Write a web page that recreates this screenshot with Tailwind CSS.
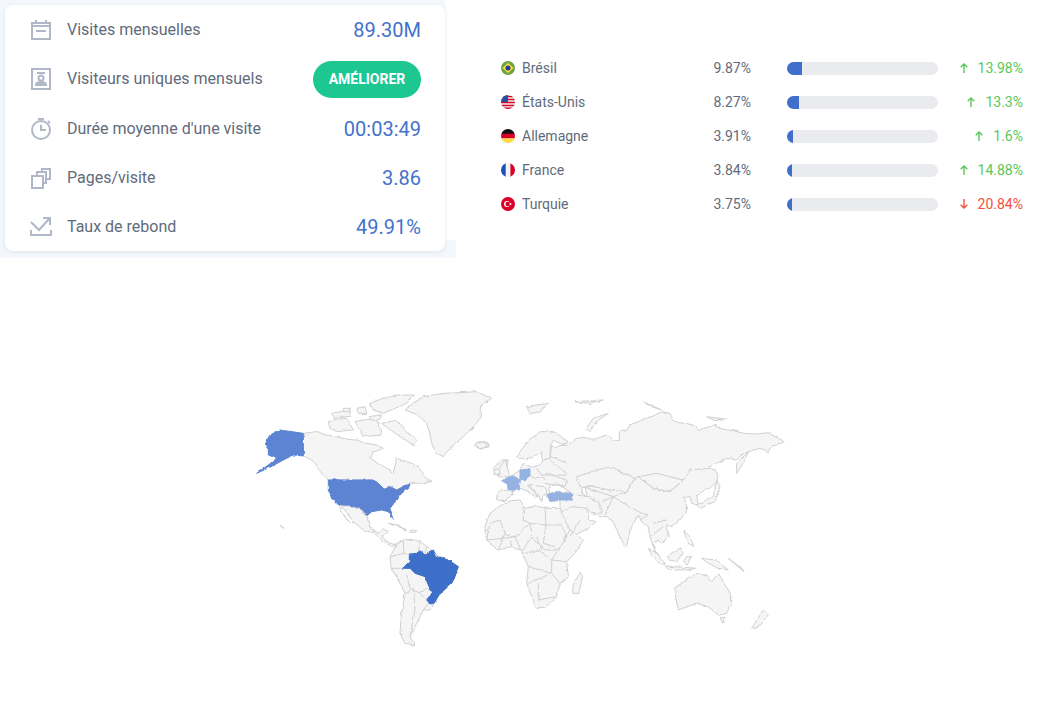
<!DOCTYPE html>
<html lang="fr">

<head>
    <meta charset="UTF-8">
    <title>Trafic</title>
    <script src="https://cdn.jsdelivr.net/npm/@tailwindcss/browser@4"></script>
</head>

<body class="bg-white font-['Roboto',sans-serif] w-[1046px] h-[724px] overflow-hidden">

    <div class="flex h-[258px]">
        <!-- Stats card -->
        <div class="relative w-[456px] h-[258px] pl-[5px] pt-[5px]">
            <div class="absolute left-0 top-0 w-[445px] h-[258px] bg-[#f4f8fc]"></div>
            <div class="absolute left-0 bottom-0 w-[456px] h-[18px] bg-[#f4f8fc]"></div>
            <div class="relative w-[440px] h-[246px] bg-white rounded-lg shadow-[0_1px_4px_rgba(120,140,170,0.18)] pl-[25px] pr-[24px] pt-[0.5px] text-[#5f6b7c]">
                <div class="flex items-center h-[49.25px]">
                    <svg class="w-[22px] h-[22px] mr-[15px]" viewBox="0 0 22 22" fill="none" stroke="#b0b8c8" stroke-width="2"><path d="M2 4h18v16H2zM6 1v4M16 1v4M2 7h18M6 12h10"/></svg>
                    <span class="flex-1 text-base">Visites mensuelles</span>
                    <span class="text-xl text-[#4472ca]">89.30M</span>
                </div>
                <div class="flex items-center h-[49.25px]">
                    <svg class="w-[22px] h-[22px] mr-[15px]" viewBox="0 0 22 22" fill="none" stroke="#b0b8c8" stroke-width="2"><path d="M2 1h18v20H2zM7 5h8"/><circle cx="11" cy="10" r="2.5"/><path d="M6 17c0-4 10-4 10 0z" fill="#b0b8c8"/></svg>
                    <span class="flex-1 text-base">Visiteurs uniques mensuels</span>
                    <button class="w-[108px] h-[37px] rounded-full bg-[#1cc88f] text-white text-sm font-bold">AMÉLIORER</button>
                </div>
                <div class="flex items-center h-[49.25px]">
                    <svg class="w-[22px] h-[22px] mr-[15px]" viewBox="0 0 22 22" fill="none" stroke="#b0b8c8" stroke-width="2"><circle cx="11" cy="12" r="9"/><path d="M11 7v5h5M8 1h6M18 3l2 2"/></svg>
                    <span class="flex-1 text-base">Durée moyenne d'une visite</span>
                    <span class="text-xl text-[#4472ca]">00:03:49</span>
                </div>
                <div class="flex items-center h-[49.25px]">
                    <svg class="w-[22px] h-[22px] mr-[15px]" viewBox="0 0 22 22" fill="none" stroke="#b0b8c8" stroke-width="2"><path d="M2 9h11v12H2zM7 9V5h9v11h-3M12 5V2h8v10h-4"/></svg>
                    <span class="flex-1 text-base">Pages/visite</span>
                    <span class="text-xl text-[#4472ca]">3.86</span>
                </div>
                <div class="flex items-center h-[49.25px]">
                    <svg class="w-[22px] h-[22px] mr-[15px]" viewBox="0 0 22 22" fill="none" stroke="#b0b8c8" stroke-width="2"><path d="M1 14v5h20v-5M1 6l8 8L19 3M13 2h7v7"/></svg>
                    <span class="flex-1 text-base">Taux de rebond</span>
                    <span class="text-xl text-[#4472ca]">49.91%</span>
                </div>
            </div>
        </div>

        <!-- Countries -->
        <div class="ml-[45px] pt-[51px] w-[522px] text-sm text-[#5f6b7c]">
            <div class="flex items-center h-[34px]">
                <svg class="w-[14px] h-[14px] mr-[7px]" viewBox="0 0 14 14"><circle cx="7" cy="7" r="7" fill="#6da544"/><path d="M7 2L12.500 7 7 12 1.500 7z" fill="#ffda44"/><circle cx="7" cy="7" r="2.500" fill="#1c3f94"/></svg>
                <span class="flex-1">Brésil</span>
                <span>9.87%</span>
                <div class="ml-[36px] w-[151px] h-[13px] rounded-full bg-[#e9ebee] overflow-hidden"><div class="h-full w-[15px] bg-[#3f6fcb]"></div></div>
                <span class="w-[85px] flex items-center justify-end text-[#5ac85a]"><svg class="w-[8px] h-[10px] mr-[10px]" viewBox="0 0 8 10" fill="none" stroke="currentColor" stroke-width="1.400"><path d="M4 10V1M.7 4.300L4 1l3.300 3.300"/></svg>13.98%</span>
            </div>
            <div class="flex items-center h-[34px]">
                <svg class="w-[14px] h-[14px] mr-[7px]" viewBox="0 0 14 14"><defs><clipPath id="us"><circle cx="7" cy="7" r="7"/></clipPath></defs><g clip-path="url(#us)"><rect width="14" height="14" fill="#f0f0f0"/><path d="M0 1.500h14M0 4.500h14M0 7.500h14M0 10.500h14M0 13.300h14" stroke="#d80027" stroke-width="1.500"/><rect width="7" height="7" fill="#2a4f9e"/></g></svg>
                <span class="flex-1">États-Unis</span>
                <span>8.27%</span>
                <div class="ml-[36px] w-[151px] h-[13px] rounded-full bg-[#e9ebee] overflow-hidden"><div class="h-full w-[12px] bg-[#3f6fcb]"></div></div>
                <span class="w-[85px] flex items-center justify-end text-[#5ac85a]"><svg class="w-[8px] h-[10px] mr-[10px]" viewBox="0 0 8 10" fill="none" stroke="currentColor" stroke-width="1.400"><path d="M4 10V1M.7 4.300L4 1l3.300 3.300"/></svg>13.3%</span>
            </div>
            <div class="flex items-center h-[34px]">
                <svg class="w-[14px] h-[14px] mr-[7px]" viewBox="0 0 14 14"><defs><clipPath id="de"><circle cx="7" cy="7" r="7"/></clipPath></defs><g clip-path="url(#de)"><rect width="14" height="5" fill="#111"/><rect y="4.700" width="14" height="4.700" fill="#d80027"/><rect y="9.400" width="14" height="4.600" fill="#ffda44"/></g></svg>
                <span class="flex-1">Allemagne</span>
                <span>3.91%</span>
                <div class="ml-[36px] w-[151px] h-[13px] rounded-full bg-[#e9ebee] overflow-hidden"><div class="h-full w-[6px] bg-[#3f6fcb]"></div></div>
                <span class="w-[85px] flex items-center justify-end text-[#5ac85a]"><svg class="w-[8px] h-[10px] mr-[10px]" viewBox="0 0 8 10" fill="none" stroke="currentColor" stroke-width="1.400"><path d="M4 10V1M.7 4.300L4 1l3.300 3.300"/></svg>1.6%</span>
            </div>
            <div class="flex items-center h-[34px]">
                <svg class="w-[14px] h-[14px] mr-[7px]" viewBox="0 0 14 14"><defs><clipPath id="fr"><circle cx="7" cy="7" r="7"/></clipPath></defs><g clip-path="url(#fr)"><rect width="5" height="14" fill="#1c50b8"/><rect x="4.700" width="4.700" height="14" fill="#f4f4f4"/><rect x="9.400" width="4.600" height="14" fill="#d80027"/></g></svg>
                <span class="flex-1">France</span>
                <span>3.84%</span>
                <div class="ml-[36px] w-[151px] h-[13px] rounded-full bg-[#e9ebee] overflow-hidden"><div class="h-full w-[5px] bg-[#3f6fcb]"></div></div>
                <span class="w-[85px] flex items-center justify-end text-[#5ac85a]"><svg class="w-[8px] h-[10px] mr-[10px]" viewBox="0 0 8 10" fill="none" stroke="currentColor" stroke-width="1.400"><path d="M4 10V1M.7 4.300L4 1l3.300 3.300"/></svg>14.88%</span>
            </div>
            <div class="flex items-center h-[34px]">
                <svg class="w-[14px] h-[14px] mr-[7px]" viewBox="0 0 14 14"><circle cx="7" cy="7" r="7" fill="#d80027"/><circle cx="6" cy="7" r="3" fill="#f6f6f6"/><circle cx="6.800" cy="7" r="2.300" fill="#d80027"/><circle cx="9.500" cy="7" r="1" fill="#f6f6f6"/></svg>
                <span class="flex-1">Turquie</span>
                <span>3.75%</span>
                <div class="ml-[36px] w-[151px] h-[13px] rounded-full bg-[#e9ebee] overflow-hidden"><div class="h-full w-[5px] bg-[#3f6fcb]"></div></div>
                <span class="w-[85px] flex items-center justify-end text-[#f4503c]"><svg class="w-[8px] h-[10px] mr-[10px]" viewBox="0 0 8 10" fill="none" stroke="currentColor" stroke-width="1.400"><path d="M4 0V9M.7 5.700L4 9l3.300-3.300"/></svg>20.84%</span>
            </div>
        </div>
    </div>

    <!-- World map -->
    <svg class="block ml-[250px] mt-[122px] w-[550px] h-[280px]" viewBox="250 380 550 280" fill="#f5f5f5" stroke="#cfcfcf" stroke-width="3" stroke-linejoin="round">
        <defs>
            <filter id="rough" x="-5%" y="-5%" width="110%" height="110%" color-interpolation-filters="sRGB">
                <feTurbulence type="fractalNoise" baseFrequency="0.18" numOctaves="2" seed="4"/>
                <feDisplacementMap in="SourceGraphic" scale="3" xChannelSelector="R" yChannelSelector="G"/>
            </filter>
        </defs>
        <g filter="url(#rough)">
        <!-- Americas -->
        <g transform="translate(250 380) scale(0.3333)">
            <path d="M465 90L490 70 520 50 550 45 580 40 630 38 680 35 725 55 700 70 690 85 695 105 680 130 660 150 640 170 610 195 600 205 580 230 560 220 545 190 540 160 530 130 505 105z"/>
            <path d="M672 195L690 185 715 188 718 200 690 208z"/>
            <path d="M395 130L420 125 440 120 465 150 500 180 490 195 460 175 420 150z"/>
            <path d="M360 70L400 55 440 45 490 45 470 70 435 85 400 100 370 90z"/>
            <path d="M235 125L265 118 290 115 310 150 260 155 240 145z"/>
            <path d="M245 100L300 90 305 108 255 115z"/>
            <path d="M320 85L345 80 350 100 325 100z"/>
            <path d="M280 85L300 85 298 95 282 95z"/>
            <path d="M315 125L350 118 380 120 395 165 340 170z"/>
            <path d="M355 110L395 105 390 118 360 120z"/>
            <path d="M730 265L755 240 775 240 765 285 740 285z"/>
            <path d="M160 160L200 155 230 165 260 170 290 178 320 180 350 190 380 195 400 205 385 212 370 215 362 235 385 250 420 270 430 280 440 235 470 245 500 255 515 275 530 295 545 305 510 310 480 310 440 330 420 320 400 325 385 310 370 300 235 300 215 280 185 240 160 228z"/>
            <path d="M45 190L60 165 90 150 160 160 160 228 130 225 100 240 60 262 20 280 55 255 80 235 55 225 55 205z" fill="#5c84d3" stroke="#5c84d3"/>
            <path d="M235 300L370 300 385 310 400 325 420 320 440 330 480 310 478 320 450 345 440 360 420 385 428 415 415 395 395 390 365 395 350 408 335 390 300 378 270 378 245 355 235 330z" fill="#5c84d3" stroke="#5c84d3"/>
            <path d="M270 378L300 378 335 390 350 408 360 440 385 460 400 445 415 455 395 470 420 490 440 495 425 500 395 480 375 460 340 450 310 425 290 395z"/>
            <path d="M270 385L285 410 300 428 285 412z"/>
            <path d="M415 430L445 435 470 450 445 440z"/>
            <path d="M480 450L500 452 495 458 480 456z"/>
            <path d="M90 435L102 445 95 442z"/>
            <path d="M440 495L460 480 485 478 510 485 545 510 560 525 595 540 625 560 615 590 605 610 585 630 565 650 540 690 520 690 495 740 480 770 495 795 465 790 450 760 452 730 455 700 465 640 445 600 425 565 420 530z"/>
            <path d="M458 565L478 545 478 522 500 520 510 512 525 525 550 510 560 530 595 540 625 560 615 590 605 610 570 640 552 670 540 672 530 660 545 640 525 590 495 580 480 565z" fill="#3d6fc9" stroke="#3d6fc9"/>
            <path d="M460 482L462 520 478 525M422 530L462 520M425 565L458 565M510 487L505 512M530 500L525 522M470 585L480 625 510 640 530 625M465 640L490 625 495 690 480 770M510 640L530 660M520 690L535 670" fill="none"/>
        </g>
        <!-- Europe, Africa, Asia, Oceania -->
        <g transform="translate(470 380) scale(0.3333)">
            <path d="M140 235L150 215 165 195 185 175 210 155 250 155 275 170 295 185 280 195 250 180 240 205 240 235 215 240 215 215 190 230 170 240 160 235z"/>
            <path d="M97 303L125 288 150 270 160 250 185 262 210 255 220 240 240 235 245 200 295 195 305 185 320 175 345 172 370 178 410 165 425 175 432 185 445 180 450 152 470 150 480 135 505 125 530 115 555 105 575 95 600 100 610 120 625 128 645 130 670 135 685 150 705 145 730 135 760 148 790 152 820 160 860 162 895 158 925 175 945 185 920 195 905 198 895 215 870 205 845 212 825 218 810 230 800 240 770 235 740 250 715 262 735 270 745 285 740 305 725 320 705 328 695 340 680 345 685 375 665 370 660 350 640 350 650 372 648 400 630 420 605 440 590 435 590 450 595 470 575 490 565 480 550 490 555 510 570 530 555 515 540 470 535 440 515 425 505 405 480 450 470 500 460 490 440 450 430 425 410 410 385 410 365 400 350 385 360 420 378 425 355 445 305 470 295 455 280 415 270 385 270 362 240 364 232 345 222 345 215 365 205 345 185 325 172 316 178 320 205 350 195 350 165 330 150 325 130 330 125 345 105 362 80 360 82 335 115 330 112 312z"/>
            <path d="M235 325L260 310 300 335 265 335 240 340z" fill="#fff"/>
            <path d="M335 325L345 320 352 350 340 345z" fill="#fff"/>
            <path d="M45 440L60 400 80 385 100 370 125 362 150 360 165 385 195 378 230 385 270 385 285 420 300 450 340 480 325 505 310 525 290 545 295 590 270 610 260 650 225 685 200 685 185 650 170 610 175 560 155 515 125 500 85 510 50 480z"/>
            <path d="M160 385L160 420 180 430 135 470 105 460 90 420 60 430M225 385L228 435 275 435 290 470 265 510 225 510 185 470 180 430 228 435M228 435L220 490 255 500M135 470L155 515M105 460L85 510M185 470L155 515M160 520L205 510 245 540 245 580 175 560M265 510L300 450M265 510L245 540 290 545M175 610L245 580 270 610M205 610L205 660 260 650M60 430L50 480 100 475 135 470M200 470L215 510M120 480L125 500" fill="none"/>
            <path d="M330 580L338 590 325 640 308 640 310 610z"/>
            <path d="M612 625L635 610 660 590 690 580 710 590 725 605 745 580 765 615 785 645 785 670 770 700 745 705 715 680 680 670 625 690z"/>
            <path d="M750 712L765 712 758 730z"/>
            <path d="M880 690L895 705 860 745 845 745z"/>
            <path d="M535 505L560 520 585 555 570 550 545 525z"/>
            <path d="M585 558L680 565 650 570 600 568z"/>
            <path d="M595 525L630 505 640 520 620 545 600 540z"/>
            <path d="M650 530L665 530 650 555 640 545z"/>
            <path d="M695 535L740 540 775 570 745 565 715 550z"/>
            <path d="M775 535L822 575 815 565z"/>
            <path d="M640 450L660 470 672 500 655 490z"/>
            <path d="M680 375L730 350 740 300 750 320 735 365 690 385z"/>
            <path d="M800 280L800 250 835 215 825 240z"/>
            <path d="M345 150L370 115 415 100 380 125 360 155z"/>
            <path d="M165 80L235 70 210 95 185 100z"/>
            <path d="M315 65L400 60 360 70z"/>
            <path d="M520 65L575 90 545 80z"/>
            <path d="M710 110L770 118 735 122z"/>
            <path d="M90 262L105 238 120 290 85 290z"/>
            <path d="M72 270L88 265 90 280 75 285z"/>
            <path d="M12 190L40 187 55 197 30 207z"/>
            <path d="M320 290L380 270 420 262 495 295 470 335 420 330 370 320 330 320zM505 290L560 280 620 295 640 300 600 335 550 325zM470 335L495 295 505 290 550 325 600 335 640 300 660 270 715 265M430 350L470 335M430 350L460 370 515 400 535 405 510 420M405 405L430 350M352 350L385 365 395 400 365 400M320 345L352 350M275 395L305 380 350 385M300 470L330 420M200 265L225 300M215 285L290 285M230 280L290 300 285 320 225 310M175 315L225 320 230 345M240 240L290 280M340 320L430 350M395 365L430 350M550 430L590 420M540 470L580 440M245 230L290 250M180 290L215 295" fill="none"/>
            <path d="M97 303L125 288 152 298 148 318 148 330 115 330 112 312z" fill="#96b2e2" stroke="#96b2e2"/>
            <path d="M150 270L180 267 180 290 165 302 150 295z" fill="#96b2e2" stroke="#96b2e2"/>
            <path d="M232 343L265 335 308 342 308 360 270 360 240 364z" fill="#96b2e2" stroke="#96b2e2"/>
        </g>
        </g>
    </svg>

</body>

</html>
